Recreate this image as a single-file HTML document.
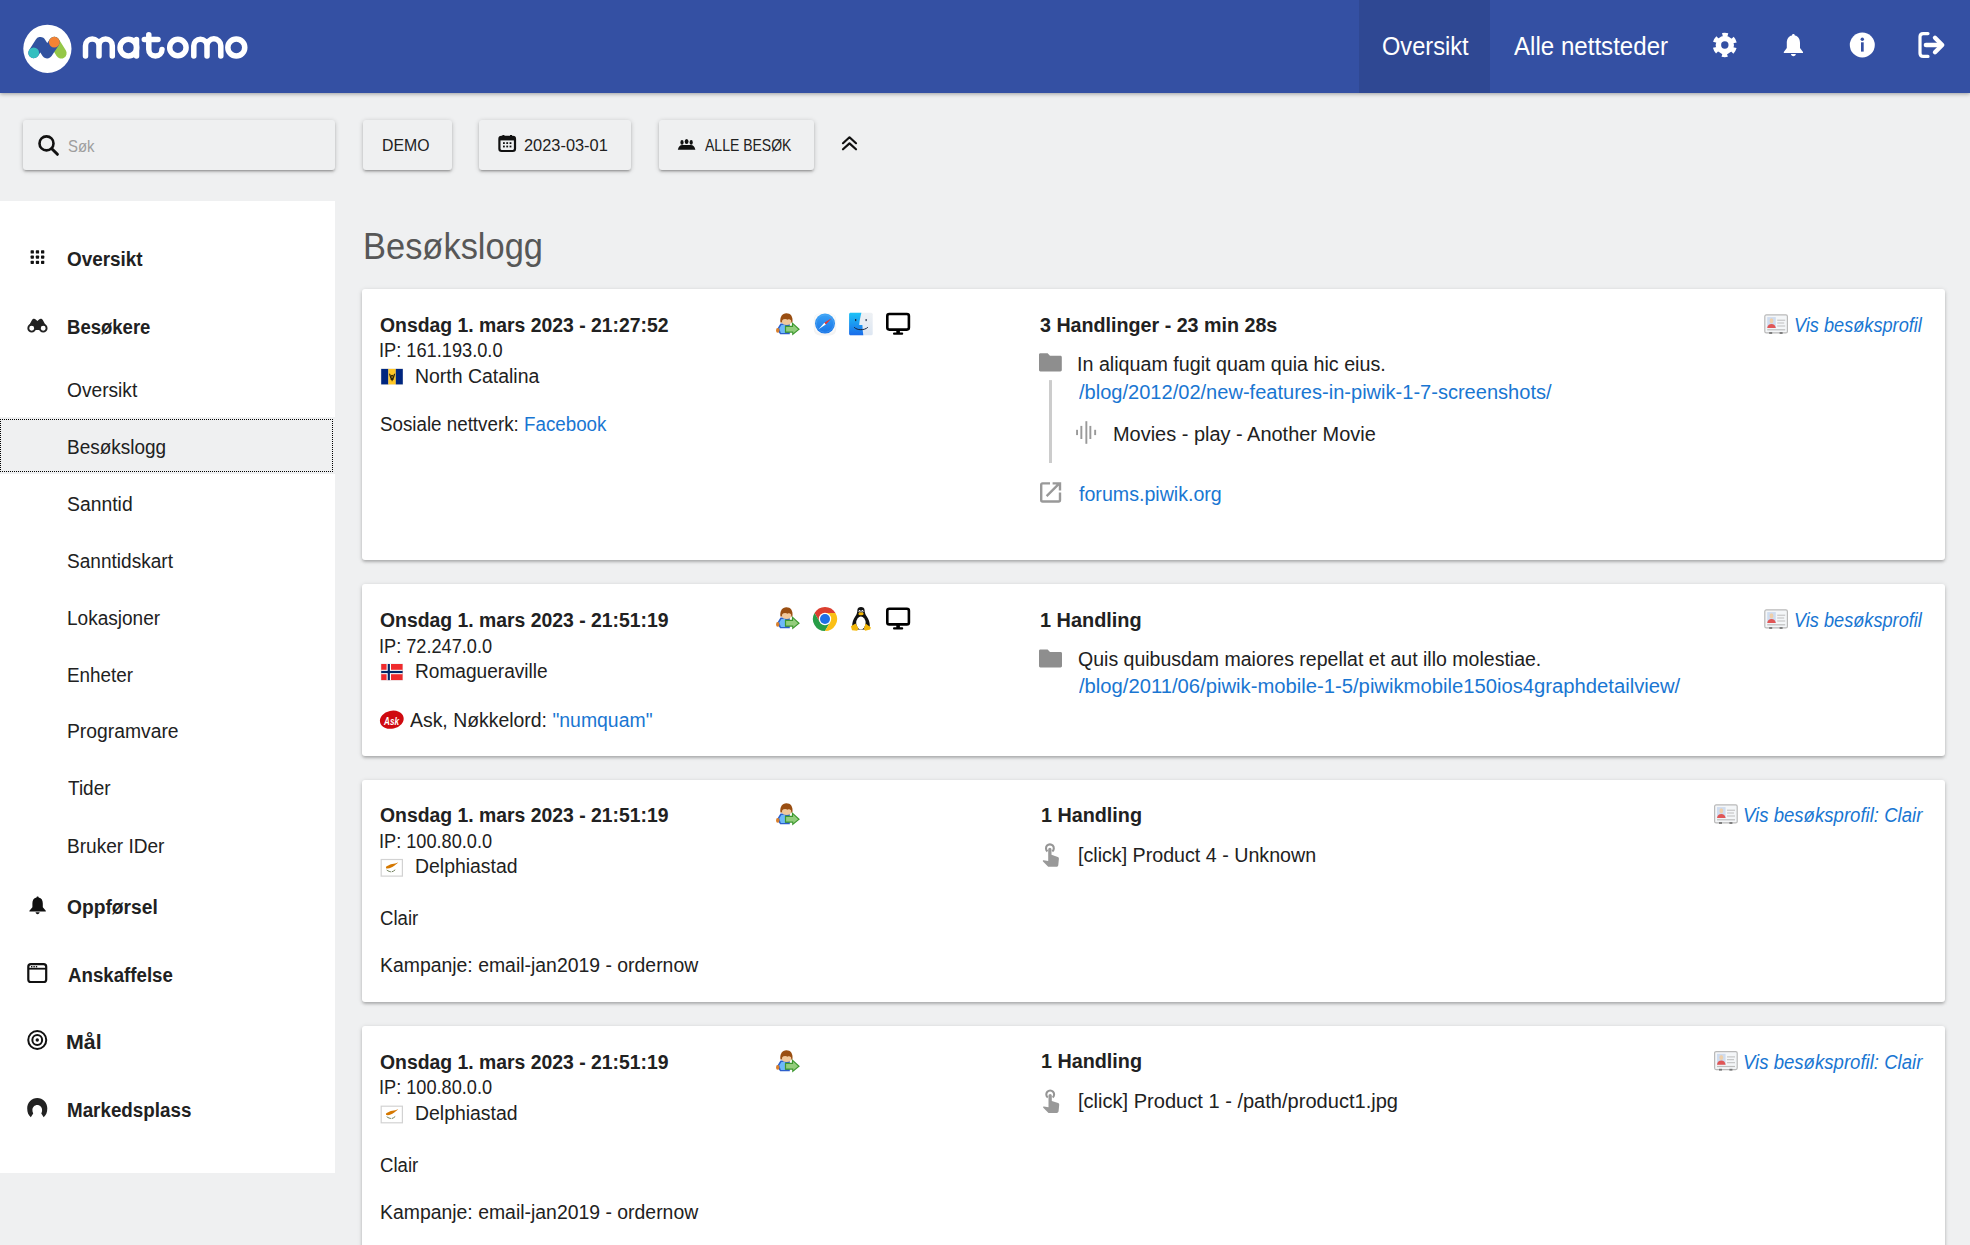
<!DOCTYPE html>
<html lang="no">
<head>
<meta charset="utf-8">
<title>Besøkslogg - Matomo</title>
<style>
html,body{margin:0;padding:0;}
body{width:1970px;height:1245px;overflow:hidden;background:#eff0f1;font-family:"Liberation Sans",sans-serif;position:relative;color:#212121;}
.t{position:absolute;white-space:nowrap;line-height:1;transform-origin:0 0;}
.abs{position:absolute;}
#hdr{position:absolute;left:0;top:0;width:1970px;height:93px;background:#3450a3;box-shadow:0 1px 4px rgba(0,0,0,.35);}
#act{position:absolute;left:1359px;top:0;width:131px;height:93px;background:#2f4893;}
.box{position:absolute;top:120px;height:50px;background:#eff0f1;border-radius:3px;box-shadow:0 2px 2px 0 rgba(0,0,0,.14),0 3px 1px -2px rgba(0,0,0,.12),0 1px 5px 0 rgba(0,0,0,.2);}
#side{position:absolute;left:0;top:201px;width:335px;height:972px;background:#fff;}
#selbg{position:absolute;left:0;top:417px;width:335px;height:57px;background:#eff0f1;}
#sel{position:absolute;left:0;top:419px;width:331px;height:51px;border:1px dotted #000;}
.card{position:absolute;left:362px;width:1583px;background:#fff;border-radius:3px;box-shadow:0 2px 3px 0 rgba(0,0,0,.15),0 3px 3px -2px rgba(0,0,0,.10),0 1px 5px 0 rgba(0,0,0,.14);}
svg.ic{position:absolute;overflow:visible;}
</style>
</head>
<body>
<div id="hdr"></div>
<div id="act"></div>
<!-- logo + nav icons -->
<svg class="ic" style="left:0;top:0" width="1970" height="93" viewBox="0 0 1970 93">
  <circle cx="47.4" cy="48.8" r="24.1" fill="#fff"/>
  <line x1="54.3" y1="42.2" x2="61.2" y2="53.2" stroke="#95c748" stroke-width="10.8" stroke-linecap="round"/>
  <polyline points="33.7,52.8 40.4,42.4 47.1,53 54.3,42.2" fill="none" stroke="#3152a0" stroke-width="10.8" stroke-linecap="round" stroke-linejoin="round"/>
  <circle cx="33.7" cy="52.8" r="5.4" fill="#35bfc0"/>
  <circle cx="54.3" cy="42.2" r="5.4" fill="#f38334"/>
  <g fill="none" stroke="#fff" stroke-width="5.5" stroke-linecap="round">
    <path d="M85.5,56 V45.75 A6.75,6.75 0 0 1 99,45.75 V56 M99,45.75 A6.65,6.65 0 0 1 112.3,45.75 V56"/>
    <circle cx="128.35" cy="47.6" r="8.3"/>
    <path d="M136.5,39.5 V56"/>
    <path d="M148.8,34.8 V49.4 A6.6,6.6 0 0 0 162,49.4 M144.3,39.5 H158"/>
    <circle cx="177.9" cy="47.5" r="8.2"/>
    <path d="M193.8,56 V45.75 A6.6,6.6 0 0 1 207,45.75 V56 M207,45.75 A6.9,6.9 0 0 1 220.8,45.75 V56"/>
    <circle cx="236.3" cy="47.5" r="8.45"/>
  </g>
  <!-- gear -->
  <g transform="translate(1724.8,45)">
    <circle r="9.2" fill="#fff"/>
    <circle r="10.3" fill="none" stroke="#fff" stroke-width="3.8" stroke-dasharray="5.4 5.386" stroke-dashoffset="8.09"/>
    <circle r="3.7" fill="#3450a3"/>
  </g>
  <!-- bell -->
  <path fill="#fff" d="M1793.4,34 C1794.3,34 1794.8,34.6 1794.8,35.4 C1798.6,36.1 1800,39.2 1800,43 V48 L1803,52 V53 H1783.8 V52 L1786.8,48 V43 C1786.8,39.2 1788.2,36.1 1792,35.4 C1792,34.6 1792.5,34 1793.4,34 Z M1791,54 H1795.8 C1795.8,55.3 1794.7,56.2 1793.4,56.2 C1792.1,56.2 1791,55.3 1791,54 Z"/>
  <!-- info -->
  <circle cx="1862.3" cy="45" r="12.5" fill="#fff"/>
  <circle cx="1862.3" cy="39.2" r="1.7" fill="#3450a3"/>
  <rect x="1861" y="42.3" width="2.7" height="9.3" fill="#3450a3"/>
  <!-- logout -->
  <path d="M1928,33.6 H1923.2 Q1920,33.6 1920,36.8 V53.2 Q1920,56.4 1923.2,56.4 H1928" fill="none" stroke="#fff" stroke-width="3.2" stroke-linecap="round"/>
  <path d="M1926,45 H1940" stroke="#fff" stroke-width="4.6" stroke-linecap="round"/>
  <path d="M1935,37.8 L1942.2,45 L1935,52.2" fill="none" stroke="#fff" stroke-width="4.4" stroke-linecap="round" stroke-linejoin="round"/>
</svg>

<!-- controls -->
<div class="box" style="left:23px;width:312px;"></div>
<div class="box" style="left:363px;width:89px;"></div>
<div class="box" style="left:479px;width:152px;"></div>
<div class="box" style="left:659px;width:155px;"></div>
<svg class="ic" style="left:0;top:100px" width="900" height="80" viewBox="0 100 900 80">
  <circle cx="46.5" cy="143.4" r="7" fill="none" stroke="#111" stroke-width="2.6"/>
  <path d="M51.8,148.7 L57.4,154.3" stroke="#111" stroke-width="3" stroke-linecap="round"/>
  <!-- calendar -->
  <rect x="499.4" y="136.8" width="15.6" height="14.2" rx="2.2" fill="none" stroke="#111" stroke-width="2.2"/>
  <rect x="499.4" y="136.8" width="15.6" height="3.6" fill="#111"/>
  <rect x="502.4" y="135" width="2" height="2.5" fill="#111"/><rect x="510" y="135" width="2" height="2.5" fill="#111"/>
  <g fill="#111"><rect x="503" y="142.2" width="1.8" height="1.8"/><rect x="506.3" y="142.2" width="1.8" height="1.8"/><rect x="509.6" y="142.2" width="1.8" height="1.8"/>
  <rect x="503" y="145.6" width="1.8" height="1.8"/><rect x="506.3" y="145.6" width="1.8" height="1.8"/><rect x="509.6" y="145.6" width="1.8" height="1.8"/></g>
  <!-- users -->
  <g fill="#111">
    <ellipse cx="682" cy="142.4" rx="1.6" ry="2.3"/>
    <ellipse cx="686.6" cy="141.5" rx="1.9" ry="2.6"/>
    <ellipse cx="691.2" cy="142.4" rx="1.6" ry="2.3"/>
    <path d="M677.8,149.7 C678.4,146.6 680,144.9 682.4,144.9 H690.8 C693.2,144.9 694.8,146.6 695.4,149.7 Z"/>
  </g>
  <!-- chevrons -->
  <path d="M843,143.2 L849.5,137.3 L856,143.2 M843,149.3 L849.5,143.4 L856,149.3" fill="none" stroke="#111" stroke-width="2.2" stroke-linecap="round" stroke-linejoin="round"/>
</svg>

<!-- sidebar -->
<div id="side"></div>
<div id="selbg"></div><div id="sel"></div>
<svg class="ic" style="left:0;top:200px" width="335" height="975" viewBox="0 200 335 975">
  <g fill="#111"><rect x="30.6" y="250.3" width="3.3" height="3.3" rx="0.7"/><rect x="35.8" y="250.3" width="3.3" height="3.3" rx="0.7"/><rect x="41.0" y="250.3" width="3.3" height="3.3" rx="0.7"/><rect x="30.6" y="255.5" width="3.3" height="3.3" rx="0.7"/><rect x="35.8" y="255.5" width="3.3" height="3.3" rx="0.7"/><rect x="41.0" y="255.5" width="3.3" height="3.3" rx="0.7"/><rect x="30.6" y="260.7" width="3.3" height="3.3" rx="0.7"/><rect x="35.8" y="260.7" width="3.3" height="3.3" rx="0.7"/><rect x="41.0" y="260.7" width="3.3" height="3.3" rx="0.7"/></g>
  <!-- binoculars -->
  <path fill="#222" d="M28.2,327 L32,320 C32.8,318.6 34.6,318.3 35.7,319.4 L37.4,321 L39.1,319.4 C40.2,318.3 42,318.6 42.8,320 L46.6,327 L44,330 L37.4,330 L30.8,330 Z"/>
  <circle cx="31.7" cy="328.2" r="3.4" fill="#fff" stroke="#222" stroke-width="1.9"/>
  <circle cx="43.2" cy="328.2" r="3.4" fill="#fff" stroke="#222" stroke-width="1.9"/>
  <!-- bell -->
  <path fill="#111" d="M37.6,896.5 C38.3,896.5 38.7,897 38.7,897.6 C41.7,898.2 42.8,900.6 42.8,903.6 V907.3 L45.8,910.7 V911.6 H29.4 V910.7 L32.4,907.3 V903.6 C32.4,900.6 33.5,898.2 36.5,897.6 C36.5,897 36.9,896.5 37.6,896.5 Z M35.6,912.3 H39.6 C39.6,913.4 38.7,914.2 37.6,914.2 C36.5,914.2 35.6,913.4 35.6,912.3 Z"/>
  <!-- window -->
  <rect x="28.3" y="964.1" width="17.9" height="17.9" rx="2.6" fill="none" stroke="#111" stroke-width="2.2"/>
  <path d="M28.3,968.7 H46.2" stroke="#111" stroke-width="1.8"/>
  <g fill="#111"><rect x="31" y="966" width="1.4" height="1.4"/><rect x="33.4" y="966" width="1.4" height="1.4"/><rect x="35.8" y="966" width="1.4" height="1.4"/></g>
  <!-- target -->
  <circle cx="37.25" cy="1040" r="9" fill="none" stroke="#111" stroke-width="2"/>
  <circle cx="37.25" cy="1040" r="4.9" fill="none" stroke="#111" stroke-width="2"/>
  <circle cx="37.25" cy="1040" r="1.7" fill="#111"/>
  <!-- marketplace -->
  <path fill="#222" d="M30.8,1117.2 C28.5,1115.4 27.2,1112.6 27.2,1108.3 C27.2,1102.6 31.7,1098 37.25,1098 C42.8,1098 47.3,1102.6 47.3,1108.3 C47.3,1112.6 46,1115.4 43.7,1117.2 L41.3,1113.4 C41.9,1112.3 42.1,1111.2 42.1,1110 C42.1,1107.2 39.9,1105 37.25,1105 C34.6,1105 32.4,1107.2 32.4,1110 C32.4,1111.2 32.6,1112.3 33.2,1113.4 Z"/>
</svg>

<!-- cards -->
<div class="card" style="top:289px;height:271px;"></div>
<div class="card" style="top:584px;height:172px;"></div>
<div class="card" style="top:780px;height:222px;"></div>
<div class="card" style="top:1026px;height:260px;"></div>

<!-- card icons -->
<svg class="ic" style="left:0;top:0" width="1970" height="1245" viewBox="0 0 1970 1245">
  <defs>
    <g id="visitor">
      <path d="M4.5,10.6 L1.6,15.2 C1,16.1 1.1,17.4 1.9,18.2 L4.2,21.3 H13.8 V10.4 H9 Z" fill="#2d5fcb"/>
      <path d="M5.4,12 L3.2,15.6 L4.9,19.9 H9.2 V11.8 Z" fill="#6db9f8"/>
      <ellipse cx="1.7" cy="17.4" rx="1.7" ry="2.4" fill="#d9802c"/>
      <path d="M4.4,9.4 C3.6,4 6.2,0.2 10.4,0.2 C14.6,0.2 17.2,3.4 16.4,9.4 Z" fill="#9a4f12"/>
      <ellipse cx="10.6" cy="8.4" rx="4.6" ry="3.5" fill="#f1c89b"/>
      <path d="M6,7.2 C6.2,4 8.2,2.8 10.8,2.8 C13.4,2.8 15.2,4 15.4,7.2 C14,6.2 12.6,6 11.6,6.8 C10.2,5.7 7.6,5.8 6,7.2 Z" fill="#9a4f12"/>
      <path d="M8.9,12.8 H15.9 V8.9 L23.9,16.2 L16.2,22.6 V19.8 H8.9 Z" fill="#3c982e"/>
      <path d="M10.1,14.1 H17.1 V11.6 L22.1,16.2 L17.3,20.2 V18.5 H10.1 Z" fill="#93cd7c"/>
    </g>
    <g id="desktop">
      <rect x="1.3" y="1.3" width="21.6" height="15.6" rx="2" fill="none" stroke="#000" stroke-width="2.6"/>
      <rect x="10.3" y="17.5" width="3.6" height="3.2" fill="#000"/>
      <rect x="7" y="19.7" width="10.2" height="2.4" rx="1" fill="#000"/>
    </g>
    <g id="profile">
      <rect x="0.6" y="1.6" width="22.6" height="18" rx="1.5" fill="#f4f6f8" stroke="#b9b9b9" stroke-width="1.2"/>
      <rect x="3" y="3.8" width="8.6" height="11" fill="#cfdcef"/>
      <ellipse cx="7.3" cy="7.5" rx="1.9" ry="2.6" fill="#efcfaa"/>
      <path d="M3,14.8 C3.4,11.8 5,10.6 7.3,10.6 C9.6,10.6 11.2,11.8 11.6,14.8 Z" fill="#e05656"/>
      <g fill="#bdbdbd"><rect x="13" y="6.4" width="8" height="1"/><rect x="13" y="9.2" width="7" height="1"/><rect x="13" y="12.2" width="8" height="1"/><rect x="3" y="15.9" width="18" height="1.2"/></g>
      <rect x="5" y="18.8" width="3" height="1.8" fill="#777"/><rect x="15.4" y="18.8" width="3" height="1.8" fill="#777"/>
    </g>
    <g id="cyprus">
      <rect x="0.5" y="0.5" width="21.2" height="16.6" fill="#fff" stroke="#d2d2d2" stroke-width="1.2"/>
      <path d="M5.2,8 C6,6.8 8,6.5 9,5.8 C10.5,5 12.5,5.3 14.5,4.6 C15.5,4.2 16.6,3.6 17.5,3.2 C16.8,4.4 15.5,5 14.8,5.8 C13.8,6.8 12,7.8 10.5,8.6 C9,9.4 7,9.8 5.5,9.4 Z" fill="#d57800"/>
      <path d="M6,11 C7.5,12.2 9.5,12.8 10.5,12.8 M11.2,12.8 C12.3,12.5 13.5,11.7 14.5,10.8" fill="none" stroke="#6e7f5a" stroke-width="1"/>
    </g>
    <g id="click">
      <path d="M11.5,13.4 A3.9,3.9 0 1 1 16.3,13.4" fill="none" stroke="#959595" stroke-width="2.1"/>
      <path d="M12.2,11.5 A1.65,1.65 0 0 1 15.5,11.5 V16.8 L21.8,19 C22.6,19.3 23,20 22.9,20.8 L22.3,27 C22.2,28 21.5,28.8 20.5,28.8 H12.2 L7,23.6 C6.5,23 6.9,22.2 7.6,22.3 L12.2,23.2 Z" fill="#999"/>
    </g>
  </defs>

  <!-- card1 icons -->
  <use href="#visitor" x="776" y="313"/>
  <!-- safari -->
  <defs>
    <linearGradient id="gsaf" x1="0" y1="0" x2="0" y2="1"><stop offset="0" stop-color="#3aa2f6"/><stop offset="1" stop-color="#1873e6"/></linearGradient>
    <linearGradient id="gfin" x1="0" y1="0" x2="0" y2="1"><stop offset="0" stop-color="#1cc3f7"/><stop offset="1" stop-color="#1a6cea"/></linearGradient>
    <linearGradient id="gfin2" x1="0" y1="0" x2="0" y2="1"><stop offset="0" stop-color="#eef1f4"/><stop offset="1" stop-color="#dde6f2"/></linearGradient>
  </defs>
  <g>
    <rect x="813.8" y="313.5" width="22.4" height="22" rx="6" fill="#f3f3f3"/>
    <rect x="814.5" y="313" width="21" height="20" rx="6" fill="#fafafa"/>
    <circle cx="825" cy="323.6" r="10" fill="url(#gsaf)"/>
    <circle cx="825" cy="323.6" r="8.6" fill="none" stroke="#8cc8f7" stroke-width="0.5" stroke-dasharray="0.6 0.6"/>
    <path d="M831.6,318.2 L825.8,324.4 L824.4,322.8 Z" fill="#f0322a"/>
    <path d="M818.6,329.2 L824.4,322.8 L825.8,324.4 Z" fill="#fff"/>
  </g>
  <!-- finder -->
  <g>
    <rect x="849.1" y="312.7" width="23.6" height="22.5" rx="1.5" fill="url(#gfin2)"/>
    <path d="M850.6,312.7 H861.4 C860.4,316.5 859.6,320.5 859.2,325 H862.4 C862.5,328.5 862.8,332 863.3,335.2 H850.6 C849.8,335.2 849.1,334.5 849.1,333.7 V314.2 C849.1,313.4 849.8,312.7 850.6,312.7 Z" fill="url(#gfin)"/>
    <rect x="855" y="319" width="1.3" height="2.1" fill="#1a2a44"/><rect x="865.5" y="319" width="1.3" height="2.1" fill="#34435a"/>
    <path d="M854.2,327.3 C857,330.4 864.5,330.6 867.8,327.3" fill="none" stroke="#17233a" stroke-width="1"/>
  </g>
  <use href="#desktop" x="886" y="312.7"/>
  <!-- flag barbados -->
  <rect x="380.7" y="368.4" width="22.4" height="16.5" fill="#f0eee8"/>
  <rect x="381.2" y="368.9" width="7.2" height="15.5" fill="#00267f"/>
  <rect x="388.4" y="368.9" width="7.4" height="15.5" fill="#ffc726"/>
  <rect x="395.8" y="368.9" width="7" height="15.5" fill="#00267f"/>
  <g fill="#2e2406"><ellipse cx="392.1" cy="377.4" rx="1.9" ry="2.7"/><path d="M388.9,373.6 L390.3,374 L391.2,377.6 L390.2,378 Z M395.3,373.6 L393.9,374 L393,377.6 L394,378 Z" /><rect x="391.6" y="379" width="1" height="2.2"/></g><ellipse cx="392.1" cy="376.9" rx="0.6" ry="1" fill="#c8a020"/>

  <!-- link card1 right -->
  <path fill="#8e8e8e" d="M1039,354.6 C1039,353.8 1039.6,353.2 1040.4,353.2 H1047.6 L1050,355.8 H1060.4 C1061.2,355.8 1061.8,356.4 1061.8,357.2 V370.1 C1061.8,370.9 1061.2,371.5 1060.4,371.5 H1040.4 C1039.6,371.5 1039,370.9 1039,370.1 Z"/>
  <rect x="1049" y="380.1" width="3" height="82.9" fill="#cccccc"/>
  <g fill="#999">
    <rect x="1076.1" y="429.8" width="1.9" height="5.3"/>
    <rect x="1080.4" y="425.9" width="1.9" height="13.1"/>
    <rect x="1085.4" y="421.2" width="1.9" height="22.6"/>
    <rect x="1089.4" y="425.9" width="1.9" height="13.1"/>
    <rect x="1094.2" y="429.8" width="1.9" height="5.3"/>
  </g>
  <path d="M1050,483.4 H1042.6 C1041.8,483.4 1041.2,484 1041.2,484.8 V500.1 C1041.2,500.9 1041.8,501.5 1042.6,501.5 H1058.6 C1059.4,501.5 1060,500.9 1060,500.1 V492.6" fill="none" stroke="#999" stroke-width="2.4"/>
  <path d="M1046.6,496.2 L1059.6,483.2 M1052.6,483.4 H1060 V490.6" fill="none" stroke="#999" stroke-width="2.4"/>
  <use href="#profile" x="1764.2" y="313.3"/>

  <!-- card2 icons -->
  <use href="#visitor" x="776" y="607"/>
  <!-- chrome -->
  <g transform="translate(825,619)">
    <path d="M10.48,-6.05 A12.1,12.1 0 0 0 -10.48,-6.05 L-5.24,3.025 L0,0 L0,-6.05 Z" fill="#db3e2f"/>
    <path d="M-10.48,-6.05 A12.1,12.1 0 0 0 0,12.1 L5.24,3.025 L0,0 L-5.24,3.025 Z" fill="#279d47"/>
    <path d="M0,12.1 A12.1,12.1 0 0 0 10.48,-6.05 L0,-6.05 L0,0 L5.24,3.025 Z" fill="#fbbf15"/>
    <circle r="6.2" fill="#fff"/>
    <circle r="5" fill="#1d6fe6"/>
  </g>
  <!-- tux -->
  <g>
    <path d="M857.4,610 C857.4,608 859,607 861,607 C863,607 864.6,608 864.6,610.2 C864.6,612.4 865.2,614.2 866.8,616.6 C868.8,619.6 869.8,622.6 869.8,625.4 C869.8,628.2 867,629.6 861,629.6 C855,629.6 852.2,628.2 852.2,625.4 C852.2,622.6 853.2,619.6 855.2,616.6 C856.8,614.2 857.4,612.4 857.4,610 Z" fill="#111"/>
    <ellipse cx="860.9" cy="623" rx="4.7" ry="6.4" fill="#fff"/>
    <ellipse cx="859.6" cy="611.2" rx="1" ry="1.3" fill="#fff"/><ellipse cx="862.4" cy="611.2" rx="1" ry="1.3" fill="#fff"/>
    <circle cx="859.8" cy="611.5" r="0.5" fill="#111"/><circle cx="862.2" cy="611.5" r="0.5" fill="#111"/>
    <ellipse cx="861" cy="613.7" rx="2.7" ry="1.5" fill="#f3b600"/>
    <path d="M850.9,626.2 L855.6,623.4 L858.4,628.2 L857.2,630.8 L852,630.2 Z" fill="#f4b80a"/>
    <path d="M870.9,627.6 L865.6,623.6 L863.8,628.8 L865.2,630.8 L870.2,629.6 Z" fill="#f4b80a"/>
  </g>
  <use href="#desktop" x="886" y="607.5"/>
  <!-- flag norway -->
  <rect x="380.7" y="663.5" width="22.4" height="17.1" fill="#e8ecee"/>
  <rect x="381.2" y="664" width="21.4" height="16.1" fill="#ef2b2d"/>
  <rect x="386.6" y="664" width="4.4" height="16.1" fill="#fff"/>
  <rect x="381.2" y="669.8" width="21.4" height="4.4" fill="#fff"/>
  <rect x="387.7" y="664" width="2.2" height="16.1" fill="#002868"/>
  <rect x="381.2" y="670.9" width="21.4" height="2.2" fill="#002868"/>
  <!-- ask -->
  <ellipse cx="391.8" cy="719.7" rx="12" ry="9" transform="rotate(-12 391.8 719.7)" fill="#cf0a10"/>
  <text x="384" y="724.6" font-family="Liberation Sans" font-style="italic" font-weight="bold" font-size="11" fill="#fff" textLength="15" lengthAdjust="spacingAndGlyphs">Ask</text>
  <path fill="#8e8e8e" d="M1039,650.8 C1039,650 1039.6,649.4 1040.4,649.4 H1047.6 L1050,652 H1060.6 C1061.4,652 1062,652.6 1062,653.4 V666.1 C1062,666.9 1061.4,667.5 1060.6,667.5 H1040.4 C1039.6,667.5 1039,666.9 1039,666.1 Z"/>
  <use href="#profile" x="1764.2" y="608.3"/>

  <!-- card3 icons -->
  <use href="#visitor" x="776" y="803"/>
  <use href="#cyprus" x="380.7" y="859"/>
  <use href="#click" x="1036" y="837.9"/>
  <use href="#profile" x="1714" y="803.3"/>

  <!-- card4 icons -->
  <use href="#visitor" x="776" y="1050"/>
  <use href="#cyprus" x="380.7" y="1105.7"/>
  <use href="#click" x="1036.3" y="1084.1"/>
  <use href="#profile" x="1714" y="1050"/>
</svg>

<div class="t" style="left:1381.50px;top:34.40px;font-size:25px;color:#fff;transform:scaleX(0.9442);">Oversikt</div>
<div class="t" style="left:1513.60px;top:34.40px;font-size:25px;color:#fff;transform:scaleX(0.9643);">Alle nettsteder</div>
<div class="t" style="left:68.27px;top:137.90px;font-size:17px;color:#9e9e9e;transform:scaleX(0.8784);">Søk</div>
<div class="t" style="left:382.38px;top:137.20px;font-size:17px;color:#212121;transform:scaleX(0.9308);">DEMO</div>
<div class="t" style="left:524.48px;top:137.20px;font-size:17px;color:#212121;transform:scaleX(0.9637);">2023-03-01</div>
<div class="t" style="left:705.10px;top:137.20px;font-size:17px;color:#212121;transform:scaleX(0.8239);">ALLE BESØK</div>
<div class="t" style="left:66.86px;top:249.50px;font-size:19.5px;color:#212121;font-weight:bold;transform:scaleX(0.9693);">Oversikt</div>
<div class="t" style="left:66.97px;top:317.50px;font-size:19.5px;color:#212121;font-weight:bold;transform:scaleX(0.9500);">Besøkere</div>
<div class="t" style="left:66.98px;top:381.00px;font-size:19.5px;color:#212121;transform:scaleX(0.9828);">Oversikt</div>
<div class="t" style="left:66.74px;top:438.00px;font-size:19.5px;color:#212121;transform:scaleX(0.9727);">Besøkslogg</div>
<div class="t" style="left:66.96px;top:494.80px;font-size:19.5px;color:#212121;transform:scaleX(0.9925);">Sanntid</div>
<div class="t" style="left:66.99px;top:551.60px;font-size:19.5px;color:#212121;transform:scaleX(0.9774);">Sanntidskart</div>
<div class="t" style="left:66.73px;top:608.90px;font-size:19.5px;color:#212121;transform:scaleX(0.9762);">Lokasjoner</div>
<div class="t" style="left:66.80px;top:665.70px;font-size:19.5px;color:#212121;transform:scaleX(0.9676);">Enheter</div>
<div class="t" style="left:66.65px;top:722.40px;font-size:19.5px;color:#212121;transform:scaleX(0.9898);">Programvare</div>
<div class="t" style="left:67.99px;top:779.30px;font-size:19.5px;color:#212121;transform:scaleX(0.9727);">Tider</div>
<div class="t" style="left:66.72px;top:836.60px;font-size:19.5px;color:#212121;transform:scaleX(0.9771);">Bruker IDer</div>
<div class="t" style="left:66.81px;top:898.10px;font-size:19.5px;color:#212121;font-weight:bold;transform:scaleX(0.9858);">Oppførsel</div>
<div class="t" style="left:67.94px;top:966.20px;font-size:19.5px;color:#212121;font-weight:bold;transform:scaleX(0.9578);">Anskaffelse</div>
<div class="t" style="left:66.07px;top:1032.70px;font-size:19.5px;color:#212121;font-weight:bold;transform:scaleX(1.0965);">Mål</div>
<div class="t" style="left:66.98px;top:1100.80px;font-size:19.5px;color:#212121;font-weight:bold;transform:scaleX(0.9641);">Markedsplass</div>
<div class="t" style="left:362.58px;top:227.70px;font-size:37px;color:#575757;transform:scaleX(0.9311);">Besøkslogg</div>
<div class="t" style="left:380.18px;top:314.80px;font-size:20px;color:#212121;font-weight:bold;transform:scaleX(0.9686);">Onsdag 1. mars 2023 - 21:27:52</div>
<div class="t" style="left:379.36px;top:339.90px;font-size:20px;color:#212121;transform:scaleX(0.9108);">IP: 161.193.0.0</div>
<div class="t" style="left:414.91px;top:366.30px;font-size:20px;color:#212121;transform:scaleX(0.9725);">North Catalina</div>
<div class="t" style="left:380.40px;top:414.10px;font-size:20px;color:#212121;transform:scaleX(0.9385);">Sosiale nettverk: <span style="color:#1976d2">Facebook</span></div>
<div class="t" style="left:1040.00px;top:315.10px;font-size:20px;color:#212121;font-weight:bold;transform:scaleX(0.9839);">3 Handlinger - 23 min 28s</div>
<div class="t" style="left:1076.70px;top:354.00px;font-size:20px;color:#212121;transform:scaleX(0.9848);">In aliquam fugit quam quia hic eius.</div>
<div class="t" style="left:1078.66px;top:381.90px;font-size:20px;color:#1976d2;transform:scaleX(1.0026);">/blog/2012/02/new-features-in-piwik-1-7-screenshots/</div>
<div class="t" style="left:1113.31px;top:423.70px;font-size:20px;color:#212121;transform:scaleX(0.9973);">Movies - play - Another Movie</div>
<div class="t" style="left:1078.86px;top:483.50px;font-size:20px;color:#1976d2;transform:scaleX(0.9805);">forums.piwik.org</div>
<div class="t" style="left:1794.10px;top:315.00px;font-size:20px;color:#1976d2;font-style:italic;transform:scaleX(0.9084);">Vis besøksprofil</div>
<div class="t" style="left:380.18px;top:609.80px;font-size:20px;color:#212121;font-weight:bold;transform:scaleX(0.9685);">Onsdag 1. mars 2023 - 21:51:19</div>
<div class="t" style="left:379.36px;top:635.60px;font-size:20px;color:#212121;transform:scaleX(0.9078);">IP: 72.247.0.0</div>
<div class="t" style="left:415.02px;top:661.30px;font-size:20px;color:#212121;transform:scaleX(0.9552);">Romagueraville</div>
<div class="t" style="left:410.04px;top:709.80px;font-size:20px;color:#212121;transform:scaleX(0.9707);">Ask, Nøkkelord: <span style="color:#1976d2">&quot;numquam&quot;</span></div>
<div class="t" style="left:1039.95px;top:609.80px;font-size:20px;color:#212121;font-weight:bold;transform:scaleX(0.9941);">1 Handling</div>
<div class="t" style="left:1077.99px;top:648.80px;font-size:20px;color:#212121;transform:scaleX(0.9760);">Quis quibusdam maiores repellat et aut illo molestiae.</div>
<div class="t" style="left:1078.66px;top:676.40px;font-size:20px;color:#1976d2;transform:scaleX(1.0115);">/blog/2011/06/piwik-mobile-1-5/piwikmobile150ios4graphdetailview/</div>
<div class="t" style="left:1794.10px;top:610.00px;font-size:20px;color:#1976d2;font-style:italic;transform:scaleX(0.9084);">Vis besøksprofil</div>
<div class="t" style="left:380.18px;top:804.80px;font-size:20px;color:#212121;font-weight:bold;transform:scaleX(0.9685);">Onsdag 1. mars 2023 - 21:51:19</div>
<div class="t" style="left:379.36px;top:830.50px;font-size:20px;color:#212121;transform:scaleX(0.9078);">IP: 100.80.0.0</div>
<div class="t" style="left:414.91px;top:856.30px;font-size:20px;color:#212121;transform:scaleX(0.9709);">Delphiastad</div>
<div class="t" style="left:380.36px;top:908.00px;font-size:20px;color:#212121;transform:scaleX(0.9297);">Clair</div>
<div class="t" style="left:380.02px;top:954.90px;font-size:20px;color:#212121;transform:scaleX(0.9702);">Kampanje: email-jan2019 - ordernow</div>
<div class="t" style="left:1040.67px;top:804.70px;font-size:20px;color:#212121;font-weight:bold;transform:scaleX(0.9878);">1 Handling</div>
<div class="t" style="left:1078.48px;top:844.90px;font-size:20px;color:#212121;transform:scaleX(0.9827);">[click] Product 4 - Unknown</div>
<div class="t" style="left:1742.92px;top:804.80px;font-size:20px;color:#1976d2;font-style:italic;transform:scaleX(0.9293);">Vis besøksprofil: Clair</div>
<div class="t" style="left:380.18px;top:1051.50px;font-size:20px;color:#212121;font-weight:bold;transform:scaleX(0.9685);">Onsdag 1. mars 2023 - 21:51:19</div>
<div class="t" style="left:379.36px;top:1077.20px;font-size:20px;color:#212121;transform:scaleX(0.9078);">IP: 100.80.0.0</div>
<div class="t" style="left:414.91px;top:1103.00px;font-size:20px;color:#212121;transform:scaleX(0.9709);">Delphiastad</div>
<div class="t" style="left:380.36px;top:1154.70px;font-size:20px;color:#212121;transform:scaleX(0.9297);">Clair</div>
<div class="t" style="left:380.02px;top:1201.60px;font-size:20px;color:#212121;transform:scaleX(0.9702);">Kampanje: email-jan2019 - ordernow</div>
<div class="t" style="left:1040.67px;top:1051.40px;font-size:20px;color:#212121;font-weight:bold;transform:scaleX(0.9878);">1 Handling</div>
<div class="t" style="left:1078.49px;top:1091.00px;font-size:20px;color:#212121;transform:scaleX(1.0029);">[click] Product 1 - /path/product1.jpg</div>
<div class="t" style="left:1742.92px;top:1051.50px;font-size:20px;color:#1976d2;font-style:italic;transform:scaleX(0.9293);">Vis besøksprofil: Clair</div>

</body>
</html>
